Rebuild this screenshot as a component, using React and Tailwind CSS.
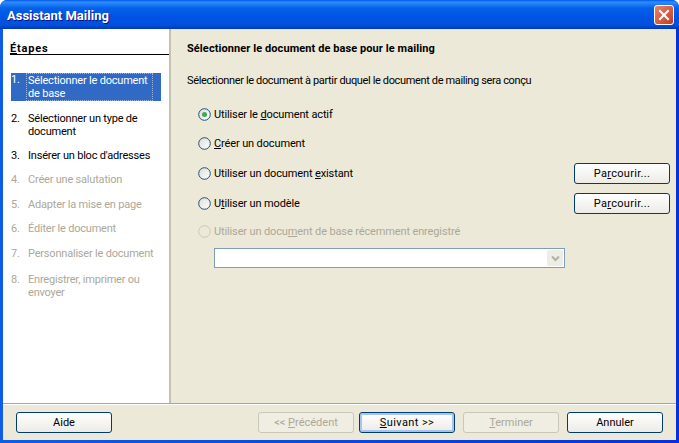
const font = { fontFamily: 'Roboto, sans-serif' };

function U({ children }) {
  return <span className="underline underline-offset-1">{children}</span>;
}

function Step({ n, disabled, selected, className = "", children }) {
  return (
    <div
      className={`flex ml-[8px] mr-[8px] leading-[13px] tracking-[-0.2px] ${
        selected
          ? "bg-[#316ac5] text-white"
          : disabled
          ? "text-[#aca899]"
          : "text-black"
      } ${className}`}
    >
      <span className="w-[15px] shrink-0">{n}.</span>
      <span
        className={`px-[2px] flex-1 ${
          selected ? "py-[1px] outline-1 outline-dotted outline-[#9db8e2] -outline-offset-1 mr-[8px]" : ""
        }`}
      >
        {children}
      </span>
    </div>
  );
}

function Radio({ checked, disabled }) {
  return (
    <svg width="13" height="13" viewBox="0 0 13 13" className="shrink-0">
      <defs>
        <linearGradient id="radioFill" x1="0" y1="0" x2="1" y2="1">
          <stop offset="0" stopColor="#dcdcd6" />
          <stop offset="1" stopColor="#ffffff" />
        </linearGradient>
      </defs>
      <circle
        cx="6.5"
        cy="6.5"
        r="5.8"
        fill={disabled ? "#ece9d8" : "url(#radioFill)"}
        stroke={disabled ? "#cac8bb" : "#1c5180"}
        strokeWidth="1"
      />
      {checked && <circle cx="6.5" cy="6.5" r="2.5" fill="#3cae4a" />}
    </svg>
  );
}

function RadioRow({ checked, disabled, className = "", action, children }) {
  return (
    <div className={`flex items-center h-[20px] ${className}`}>
      <div className="ml-[11px] flex items-center gap-[3px] flex-1">
        <Radio checked={checked} disabled={disabled} />
        <span className={`tracking-[-0.13px] ${disabled ? "text-[#aca899]" : "text-black"}`}>{children}</span>
      </div>
      {action && (
        <Btn className="w-[96px] mr-[6px] tracking-[0.3px]">{action}</Btn>
      )}
    </div>
  );
}

function Btn({ disabled, primary, className = "", children }) {
  return (
    <div
      className={`h-[21px] rounded-[3px] border flex items-center justify-center ${
        disabled
          ? "border-[#c9c7ba] bg-[#f0eee2] text-[#aca899]"
          : primary
          ? "border-[#003c74] bg-gradient-to-b from-white to-[#ecebe5] text-black shadow-[inset_0_0_0_2px_#a9c4ea]"
          : "border-[#003c74] bg-gradient-to-b from-white to-[#ecebe5] text-black"
      } ${className}`}
    >
      <span>{children}</span>
    </div>
  );
}

export default function App() {
  return (
    <div
      style={font}
      className="w-[679px] h-[443px] flex flex-col overflow-hidden text-[11px] leading-[13px] bg-[linear-gradient(to_right,#0f5ce6,#0831d9)] rounded-t-[7px]"
    >
      {/* title bar */}
      <div className="h-[29px] shrink-0 flex items-center justify-between pl-[7px] pr-[5px] bg-[linear-gradient(to_bottom,#0058ee_0px,#2f8cf8_2px,#1a78f5_5px,#0561e8_8px,#0055e5_16px,#0050dc_25px,#0036b8_29px)]">
        <span className="text-white font-bold text-[13px] mt-[2px] [text-shadow:1px_1px_0_#0f1089]">
          Assistant Mailing
        </span>
        <div className="w-[20px] h-[20px] rounded-[3px] border border-white bg-gradient-to-br from-[#e8836a] to-[#c4381c] flex items-center justify-center">
          <svg width="12" height="12" viewBox="0 0 12 12">
            <path d="M2 2 L10 10 M10 2 L2 10" stroke="#fff" strokeWidth="2" strokeLinecap="square" />
          </svg>
        </div>
      </div>

      {/* body */}
      <div className="flex-1 flex flex-col mx-[3px] mb-[3px] bg-[#ece9d8] min-h-0">
        <div className="flex-1 flex min-h-0 border-b border-[#aca899] shadow-[0_1px_0_#fff]">
          {/* steps */}
          <div className="w-[168px] shrink-0 bg-white border-r-2 border-r-[#c5c2b2] pt-[13px]">
            <div className="ml-[7px] mb-[18px] font-bold text-black border-b border-black h-[13px] tracking-[0.8px]">
              <U>É</U>tapes
            </div>
            <Step n="1" selected>
              Sélectionner le document de base
            </Step>
            <Step n="2" className="mt-[11px]">
              Sélectionner un type de document
            </Step>
            <Step n="3" className="mt-[11px]">
              Insérer un bloc d'adresses
            </Step>
            <Step n="4" disabled className="mt-[11px]">
              Créer une salutation
            </Step>
            <Step n="5" disabled className="mt-[12px]">
              Adapter la mise en page
            </Step>
            <Step n="6" disabled className="mt-[11px]">
              Éditer le document
            </Step>
            <Step n="7" disabled className="mt-[12px]">
              Personnaliser le document
            </Step>
            <Step n="8" disabled className="mt-[13px]">
              Enregistrer, imprimer ou envoyer
            </Step>
          </div>

          {/* page */}
          <div className="flex-1 pl-[16px] pt-[13px]">
            <div className="font-bold text-black h-[13px] tracking-[0.08px]">
              Sélectionner le document de base pour le mailing
            </div>
            <div className="mt-[19px] text-black h-[13px] tracking-[-0.36px]">
              Sélectionner le document à partir duquel le document de mailing sera conçu
            </div>
            <div className="mt-[17px]">
              <RadioRow checked>
                Utiliser le <U>d</U>ocument actif
              </RadioRow>
              <RadioRow className="mt-[9px]">
                <U>C</U>réer un document
              </RadioRow>
              <RadioRow className="mt-[10px]" action={<>Pa<U>r</U>courir...</>}>
                Utiliser un document <U>e</U>xistant
              </RadioRow>
              <RadioRow className="mt-[10px]" action={<>Pa<U>r</U>courir...</>}>
                U<U>t</U>iliser un modèle
              </RadioRow>
              <RadioRow disabled className="mt-[8px]">
                Utiliser un docu<U>m</U>ent de base récemment enregistré
              </RadioRow>
            </div>
            <div className="ml-[27px] mt-[7px] w-[351px] h-[20px] border border-[#7f9db9] bg-white flex items-center justify-end pr-[1px]">
              <div className="w-[16px] h-[16px] rounded-[2px] bg-[#eeede5] flex items-center justify-center">
                <svg width="9" height="7" viewBox="0 0 9 7">
                  <path d="M1 1.5 L4.5 5 L8 1.5" fill="none" stroke="#b0b0a8" strokeWidth="2" />
                </svg>
              </div>
            </div>
          </div>
        </div>

        {/* footer buttons */}
        <div className="h-[36px] shrink-0 flex items-start pt-[8px] pl-[13px] pr-[13px]">
          <Btn className="w-[96px]">Aide</Btn>
          <div className="flex-1" />
          <Btn disabled className="w-[96px]">
            &lt;&lt; <U>P</U>récédent
          </Btn>
          <Btn primary className="w-[96px] ml-[5px] tracking-[0.4px]">
            <U>S</U>uivant &gt;&gt;
          </Btn>
          <Btn disabled className="w-[96px] ml-[8px]">
            <U>T</U>erminer
          </Btn>
          <Btn className="w-[96px] ml-[8px]">Annuler</Btn>
        </div>
      </div>
    </div>
  );
}
